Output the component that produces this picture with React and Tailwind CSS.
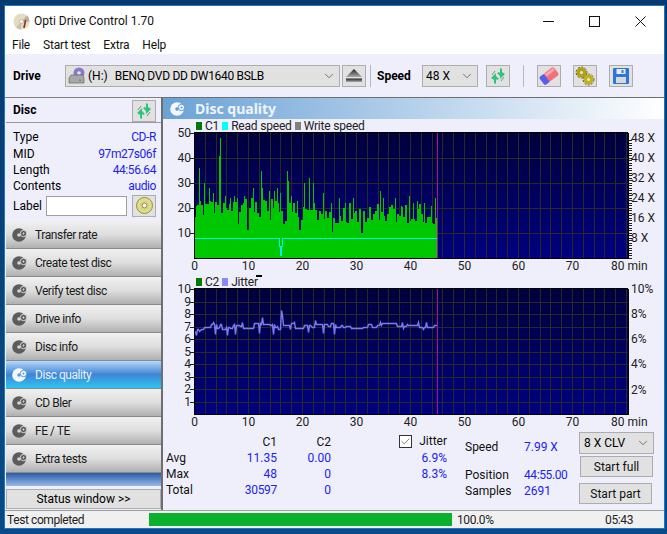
import React from 'react';
import { Check, ChevronDown } from 'lucide-react';

const font = "font-['Roboto','Noto_Sans',sans-serif]";

// small seeded random so the chart noise stays the same on every load
function makeRandom(seed) {
  let s = seed;
  return () => {
    s = (s * 16807) % 2147483647;
    return s / 2147483647;
  };
}

const xOf = (min) => 193.5 + min * 5.4;

function buildC1() {
  const rnd = makeRandom(4711);
  const spikes = { 195: 21, 198: 36, 199: 23, 203: 30, 208: 28, 212: 26, 218: 41, 219: 48, 224: 25, 229: 24, 233: 25, 236: 24, 243: 25, 252: 28, 260: 35, 261: 28, 268: 27, 273: 27, 276: 28, 279: 26, 286: 35, 287: 31, 290: 25, 296: 23, 303: 30, 308: 32, 312: 30, 322: 26, 330: 22, 338: 24, 344: 22, 352: 24, 379: 27, 382: 24, 394: 24, 400: 21, 408: 25, 412: 22, 416: 23, 423: 22, 430: 21, 434: 24 };
  const bars = [];
  let held = 18;
  for (let x = 194; x < 437; x++) {
    const base = x < 300 ? 20 : x < 420 ? 18 : 18 - (x - 420) * 0.3;
    // hold noise for two pixels, the bars in the reference are wider than one
    if (x % 2 === 0) {
      held = base + rnd() * 8 - 4;
      if (rnd() < 0.1) held -= 6;
    }
    const v = spikes[x] ? spikes[x] : held;
    bars.push([x, v]);
  }
  return bars;
}

function buildJitter() {
  const rnd = makeRandom(911);
  const dips = { 195: 6.3, 214: 6.4, 226: 6.3, 234: 6.4, 258: 6.5, 272: 6.4, 307: 6.6, 322: 6.5, 333: 6.4 };
  const peaks = { 212: 7.4, 241: 7.4, 261: 7.8, 280: 8.3, 281: 7.9, 293: 7.4, 314: 7.5, 379: 7.4, 401: 7.4, 417: 7.4, 425: 7.4 };
  const pts = [];
  let v = 6.6;
  for (let x = 194; x < 437; x++) {
    // hold a value for a few pixels, the reference line is stepped
    if (rnd() < 0.3) v = 7.05 + (rnd() - 0.5) * 0.5;
    let shown = x < 200 ? 6.5 + rnd() * 0.4 : v;
    if (dips[x]) shown = dips[x];
    if (peaks[x]) shown = peaks[x];
    pts.push(`${x + 0.5},${Math.round(414.5 - shown * 12.55) + 0.5}`);
  }
  return pts.join(' ');
}

const c1Bars = buildC1();
const jitterLine = buildJitter();

function Chart({ height, plotTop, plotBottom, id, rows, left, right, children }) {
  const vLines = [];
  for (let m = 2; m <= 80; m += 2) vLines.push(m);
  return (
    <svg className="block -mt-[7px]" width="502" height={height + 7} viewBox={`162 ${plotTop - 7} 502 ${height + 7}`}>
      <defs>
        <linearGradient id={id} x1="0" y1="0" x2="0" y2="1">
          <stop offset="0%" stopColor="#00003c" />
          <stop offset="100%" stopColor="#000080" />
        </linearGradient>
      </defs>
      <rect x="193" y={plotTop} width="434" height={plotBottom - plotTop} fill={`url(#${id})`} />
      <g shapeRendering="crispEdges">
        {vLines.map((m) => (
          <line key={m} x1={xOf(m)} x2={xOf(m)} y1={plotTop} y2={plotBottom} stroke="#2a2a24" />
        ))}
        {rows.map((y) => (
          <line key={y} x1="193" x2="627" y1={y} y2={y} stroke="#2a2a24" />
        ))}
      </g>
      {children}
      <g shapeRendering="crispEdges">
        <line x1="436.5" x2="436.5" y1={plotTop} y2={plotBottom} stroke="#b0108c" />
        <line x1="193" x2="627" y1={plotTop - 0.5} y2={plotTop - 0.5} stroke="#000" />
        <line x1="193" x2="627" y1={plotBottom + 0.5} y2={plotBottom + 0.5} stroke="#000" />
        <line x1="193.5" x2="193.5" y1={plotTop} y2={plotBottom + 1} stroke="#000" />
        <line x1="627" x2="627" y1={plotTop} y2={plotBottom + 1} stroke="#000" />
      </g>
      <g fontFamily="Roboto, sans-serif" fontSize="12" fill="#222">
        {left.map(([label, y]) => (
          <g key={label}>
            <line x1="189" x2="193" y1={y} y2={y} stroke="#222" shapeRendering="crispEdges" />
            <text x="190" y={y + 4} textAnchor="end">{label}</text>
          </g>
        ))}
        {right.map(([label, y]) => (
          <text key={label} x="630" y={y + 4}>{label}</text>
        ))}
        {[0, 10, 20, 30, 40, 50, 60, 70].map((m) => (
          <text key={m} x={xOf(m)} y={plotBottom + 12} textAnchor="middle">{m}</text>
        ))}
        <text x="610" y={plotBottom + 12}>80 min</text>
      </g>
    </svg>
  );
}

function RefreshIcon() {
  return (
    <svg width="18" height="18" viewBox="0 0 18 18">
      <path d="M2 11l5-5v3l3 3-2 1-1-1v5l-2-1v-3z" fill="#2fc47c" />
      <path d="M16 7l-5 5V9L8 6l2-1 1 1V1l2 1v3z" fill="#2fc47c" />
      <path d="M3 8l3-4M15 10l-3 4" stroke="#7b8a80" strokeWidth="1" fill="none" />
    </svg>
  );
}

function EraserIcon() {
  return (
    <svg width="20" height="20" viewBox="0 0 20 20">
      <g transform="rotate(-38 10 10)">
        <rect x="1" y="5" width="7" height="10" rx="2" fill="#5560e8" />
        <rect x="7" y="5" width="12" height="10" rx="2" fill="#f0707c" />
        <rect x="8" y="6" width="10" height="3" fill="#f8a8b0" />
      </g>
    </svg>
  );
}

function ChainIcon() {
  return (
    <svg width="20" height="20" viewBox="0 0 20 20" fill="none">
      <circle cx="6.5" cy="6.5" r="5.4" stroke="#4e4a08" strokeWidth="1" strokeDasharray="2 1.5" />
      <circle cx="13.5" cy="13.5" r="5.4" stroke="#4e4a08" strokeWidth="1" strokeDasharray="2 1.5" />
      <circle cx="6.5" cy="6.5" r="3.3" stroke="#b0a212" strokeWidth="3.4" />
      <circle cx="13.5" cy="13.5" r="3.3" stroke="#c0b21c" strokeWidth="3.4" />
    </svg>
  );
}

function SaveIcon() {
  return (
    <svg width="18" height="18" viewBox="0 0 18 18">
      <rect x="1" y="1" width="16" height="16" rx="1" fill="#2f74d8" />
      <rect x="4.5" y="2" width="9" height="5" fill="#e8eef8" />
      <rect x="9.5" y="3" width="2" height="3" fill="#2f74d8" />
      <rect x="4" y="10" width="10" height="6" fill="#d8d8d8" />
    </svg>
  );
}

function EjectIcon() {
  return (
    <svg width="16" height="13" viewBox="0 0 16 13">
      <defs>
        <linearGradient id="ej" x1="0" y1="0" x2="0" y2="1">
          <stop offset="0%" stopColor="#222" />
          <stop offset="100%" stopColor="#aaa" />
        </linearGradient>
      </defs>
      <path d="M8 0l8 8H0z" fill="url(#ej)" />
      <rect x="0" y="9.5" width="16" height="3.5" fill="url(#ej)" />
    </svg>
  );
}

function DriveIcon() {
  return (
    <svg width="17" height="17" viewBox="0 0 17 17">
      <circle cx="11" cy="6" r="5.5" fill="#8b78c8" />
      <circle cx="11" cy="6" r="1.8" fill="#e8e4f4" />
      <path d="M1 11l2-3h12l1 3v5H1z" fill="#a8a8a8" stroke="#666" strokeWidth="0.7" />
      <rect x="11" y="12.5" width="2" height="1.5" fill="#22b84c" />
    </svg>
  );
}

function AppIcon() {
  return (
    <svg width="17" height="17" viewBox="0 0 17 17">
      <circle cx="8.5" cy="8.5" r="8" fill="#e4dcc0" />
      <path d="M8.5 8.5L14 2.5a8 8 0 0 1 2.5 6z" fill="#b8b09a" />
      <path d="M8.5 8.5L3 14.5a8 8 0 0 0 5 2z" fill="#c8c0a8" />
      <circle cx="8.5" cy="8.5" r="2" fill="#fff" stroke="#999" strokeWidth="0.6" />
      <rect x="11" y="7" width="1.6" height="8" fill="#8a2a20" transform="rotate(12 12 11)" />
    </svg>
  );
}

function GoldDisc() {
  return (
    <svg width="17" height="17" viewBox="0 0 17 17">
      <circle cx="8.5" cy="8.5" r="8" fill="#e2e07a" stroke="#77774a" strokeWidth="0.8" />
      <circle cx="8.5" cy="8.5" r="5" fill="#d6d48a" />
      <circle cx="8.5" cy="8.5" r="2.4" fill="#f8f8ea" stroke="#77774a" strokeWidth="0.8" />
    </svg>
  );
}

function NavIcon({ active }) {
  const c = active ? '#f4f8fc' : '#5c5c5c';
  const hole = active ? '#5b9ade' : '#d8d8d8';
  return (
    <svg width="16" height="16" viewBox="0 0 16 16">
      <circle cx="7" cy="8" r="6.8" fill={c} />
      <circle cx="7" cy="8" r="1.8" fill={hole} />
      <circle cx="11.5" cy="6.5" r="3.2" fill={c} stroke={hole} strokeWidth="1" />
      <path d="M10.5 6.5h2M11.5 5.5v2" stroke={hole} strokeWidth="1" />
    </svg>
  );
}

function IconButton({ children, className = '' }) {
  return (
    <button className={`flex items-center justify-center h-[22px] w-[24px] bg-[#e1e1e1] border border-[#adadad] ${className}`}>
      {children}
    </button>
  );
}

function Combo({ text, className = '' }) {
  return (
    <div className={`flex items-center h-[22px] bg-[#e1e1e1] border border-[#adadad] text-[12px] text-black ${className}`}>
      {text}
      <ChevronDown className="ml-auto mr-[3px] text-[#444]" size={14} strokeWidth={1.2} />
    </div>
  );
}

const navItems = ['Transfer rate', 'Create test disc', 'Verify test disc', 'Drive info', 'Disc info', 'Disc quality', 'CD Bler', 'FE / TE', 'Extra tests'];

function DiscRow({ label, value }) {
  return (
    <div className="flex justify-between items-center h-[16.4px]">
      <span>{label}</span>
      <span className="text-[#2222ee] tracking-[-0.4px]">{value}</span>
    </div>
  );
}

function Legend({ items, children }) {
  return (
    <div className="relative z-10 flex items-center h-[13px] pb-[1px] pl-[33px] gap-[3px] text-[12px] leading-none text-[#222] tracking-[-0.2px]">
      {items.map(([label, color]) => (
        <React.Fragment key={label}>
          <span className={`w-[6px] h-[8px] ${color}`} />
          <span>{label}</span>
        </React.Fragment>
      ))}
      {children}
    </div>
  );
}

export default function App() {
  return (
    <div className={`w-[667px] h-[534px] overflow-hidden bg-gradient-to-b from-[#083a70] to-[#0a4a88] pt-[5px] pl-[4px] pr-[2px] pb-[5px] ${font}`}>
      <div className="flex flex-col h-[524px] border border-[#1a78c2] bg-white">
        {/* title and menu */}
        <div className="flex items-center h-[30px] pl-[8px]">
          <AppIcon />
          <span className="ml-[4px] text-[12px] text-[#111]">Opti Drive Control 1.70</span>
          <div className="ml-auto flex items-center gap-[35px] pr-[18px]">
            <svg width="11" height="11" viewBox="0 0 11 11"><path d="M0 5.5h11" stroke="#111" /></svg>
            <svg width="11" height="11" viewBox="0 0 11 11"><rect x=".5" y=".5" width="10" height="10" fill="none" stroke="#111" /></svg>
            <svg width="11" height="11" viewBox="0 0 11 11"><path d="M.5.5l10 10M10.5.5l-10 10" stroke="#111" /></svg>
          </div>
        </div>
        <div className="flex items-center h-[18px] pl-[7px] gap-[13px] text-[12px] text-[#111] tracking-[-0.2px]">
          <span>File</span>
          <span>Start test</span>
          <span>Extra</span>
          <span>Help</span>
        </div>

        {/* toolbar */}
        <div className="flex items-center h-[43px] bg-[#efeffc] pl-[8px] text-[12px] text-black">
          <span className="font-bold w-[52px]">Drive</span>
          <Combo className="w-[275px] pl-[2px]" text={<span className="flex items-center"><DriveIcon /><span className="ml-[3px]">(H:)</span><span className="ml-[7px] tracking-[-0.3px]">BENQ DVD DD DW1640 BSLB</span></span>} />
          <IconButton className="ml-[2px]"><EjectIcon /></IconButton>
          <span className="ml-[4px] h-[22px] w-px bg-[#b8b8c0]" />
          <span className="font-bold ml-[6px] w-[45px]">Speed</span>
          <Combo className="w-[56px] pl-[3px]" text="48 X" />
          <IconButton className="ml-[8px]"><RefreshIcon /></IconButton>
          <span className="ml-[13px] h-[22px] w-px bg-[#b8b8c0]" />
          <IconButton className="ml-[13px]"><EraserIcon /></IconButton>
          <IconButton className="ml-[12px]"><ChainIcon /></IconButton>
          <IconButton className="ml-[12px]"><SaveIcon /></IconButton>
        </div>

        <div className="flex h-[413px] bg-[#efeffc]">
          {/* left column */}
          <div className="flex flex-col w-[156px] text-[12px] text-black">
            <div className="h-[124px] border-t border-[#808080] pl-[1px]">
              <div className="flex items-center justify-between h-[25px] pl-[7px] pr-[5px] border-b border-[#9a9a9a]">
                <span className="font-bold">Disc</span>
                <IconButton className="mt-[1px]"><RefreshIcon /></IconButton>
              </div>
              <div className="pl-[7px] pr-[5px] pt-[6px]">
                <DiscRow label="Type" value="CD-R" />
                <DiscRow label="MID" value="97m27s06f" />
                <DiscRow label="Length" value="44:56.64" />
                <DiscRow label="Contents" value="audio" />
                <div className="flex items-center">
                  <span className="w-[33px]">Label</span>
                  <div className="w-[81px] h-[20px] bg-white border border-[#a0a0a0]" />
                  <IconButton className="ml-[5px]"><GoldDisc /></IconButton>
                </div>
              </div>
            </div>
            <div className="flex flex-col pl-[1px]">
              {navItems.map((item) => {
                const active = item === 'Disc quality';
                return (
                  <div
                    key={item}
                    className={`flex items-center h-[28px] pl-[6px] border-b border-[#8a8a8a] tracking-[-0.45px] ${active ? 'bg-gradient-to-b from-[#b6d8fa] via-[#3f84d4] to-[#27c6f2] text-[#e8f2fb]' : 'bg-gradient-to-b from-[#f0f0f0] via-[#dedede] to-[#b0b0b0] text-[#1a1a1a]'}`}
                  >
                    <NavIcon active={active} />
                    <span className="ml-[7px]">{item}</span>
                  </div>
                );
              })}
              <div className="h-[13px] bg-gradient-to-b from-[#2a5aa8] to-[#9abae4]" />
              <button className="mt-[3px] h-[20px] bg-[#e1e1e1] border border-[#adadad]">Status window &gt;&gt;</button>
            </div>
          </div>

          {/* right column */}
          <div className="flex flex-col w-[503px] border-l-2 border-t border-[#6e6e6e]">
            <div className="flex items-center h-[21px] bg-gradient-to-r from-[#6aa2d4] to-white pl-[7px]">
              <NavIcon active />
              <span className="ml-[9px] font-['Noto_Sans',sans-serif] text-[14px] font-bold text-[#eef4fa]">Disc quality</span>
            </div>
            <div className="h-[1px]" />
            <Legend items={[['C1', 'bg-[#007a00]'], ['Read speed', 'bg-[#00ffff]'], ['Write speed', 'bg-[#808080]']]} />
            <Chart
              id="top"
              height={143}
              plotTop={133}
              plotBottom={258}
              rows={[158, 183, 208, 233]}
              left={[['50', 133], ['40', 158], ['30', 183], ['20', 208], ['10', 233]]}
              right={[['48 X', 138], ['40 X', 158], ['32 X', 178], ['24 X', 198], ['16 X', 218], ['8 X', 238]]}
            >
              <g shapeRendering="crispEdges">
                {c1Bars.map(([x, v]) => (
                  <rect key={x} x={x} y={258 - v * 2.5} width="1" height={v * 2.5} fill="#00c800" />
                ))}
                {[...Array(48)].map((_, i) => (
                  <line key={i} x1="627" x2="631" y1={258 - i * 2.5} y2={258 - i * 2.5} stroke="#222" />
                ))}
                <path d="M194 238.5h84.5v8h1v9h1v-9h1v-8h155" fill="none" stroke="#00f0f0" strokeWidth="1" />
              </g>
            </Chart>
            <Legend items={[['C2', 'bg-[#007a00]'], ['Jitter', 'bg-[#8888ff]']]}>
              <span className="absolute left-[93px] -top-[1px] w-[6px] h-[2px] bg-black" />
            </Legend>
            <Chart
              id="bottom"
              height={144}
              plotTop={289}
              plotBottom={414}
              rows={[1, 2, 3, 4, 5, 6, 7, 8, 9].map((v) => Math.round(414.5 - v * 12.55))}
              left={[10, 9, 8, 7, 6, 5, 4, 3, 2, 1].map((v) => [String(v), Math.round(414.5 - v * 12.55)])}
              right={[['10%', 289], ['8%', 314], ['6%', 339], ['4%', 364], ['2%', 390]]}
            >
              <polyline points={jitterLine} fill="none" stroke="#7c7cf2" strokeWidth="1.4" />
            </Chart>

            {/* stats */}
            <div className="flex h-[73px] text-[12px] text-[#111]">
              <div className="grid grid-cols-[60px_51px_54px] auto-rows-[16px] pl-[3px]">
                <span />
                <span className="text-right">C1</span>
                <span className="text-right">C2</span>
                <span>Avg</span>
                <span className="text-right text-[#2222ee]">11.35</span>
                <span className="text-right text-[#2222ee]">0.00</span>
                <span>Max</span>
                <span className="text-right text-[#2222ee]">48</span>
                <span className="text-right text-[#2222ee]">0</span>
                <span>Total</span>
                <span className="text-right text-[#2222ee] tracking-[-0.3px]">30597</span>
                <span className="text-right text-[#2222ee]">0</span>
              </div>
              <div className="w-[48px] ml-[68px] flex flex-col">
                <div className="flex items-center h-[16px] justify-between">
                  <span className="flex items-center justify-center w-[13px] h-[13px] border border-[#333] bg-white">
                    <Check size={11} strokeWidth={1.5} className="text-[#444]" />
                  </span>
                  <span>Jitter</span>
                </div>
                <span className="h-[16px] text-right text-[#2222ee]">6.9%</span>
                <span className="h-[16px] text-right text-[#2222ee]">8.3%</span>
              </div>
              <div className="grid grid-cols-[59px_auto] auto-rows-[16px] content-start ml-[18px] w-[114px] pt-[5px]">
                <span className="h-[28px]">Speed</span>
                <span className="h-[28px] text-[#2222ee]">7.99 X</span>
                <span className="mt-[12px]">Position</span>
                <span className="mt-[12px] text-[#2222ee] tracking-[-0.4px]">44:55.00</span>
                <span className="mt-[12px]">Samples</span>
                <span className="mt-[12px] text-[#2222ee]">2691</span>
              </div>
              <div className="flex flex-col w-[75px] -mt-[1px]">
                <Combo className="w-[75px] pl-[4px]" text="8 X CLV" />
                <button className="w-[73px] h-[21px] ml-[1px] mt-[2px] bg-[#e1e1e1] border border-[#adadad]">Start full</button>
                <button className="w-[73px] h-[21px] mt-[6px] bg-[#e1e1e1] border border-[#adadad]">Start part</button>
              </div>
            </div>
          </div>
        </div>

        {/* status bar */}
        <div className="flex items-center h-[18px] bg-[#f0f0f0] border-t border-[#a0a0a0] text-[12px] text-[#222] tracking-[-0.4px]">
          <span className="w-[140px] pl-[2px]">Test completed</span>
          <div className="flex h-[13px] w-[303px] ml-[4px] bg-[#0bb02d]" />
          <span className="ml-[5px] w-[58px]">100.0%</span>
          <span className="ml-auto mr-[31px]">05:43</span>
        </div>
      </div>
    </div>
  );
}
